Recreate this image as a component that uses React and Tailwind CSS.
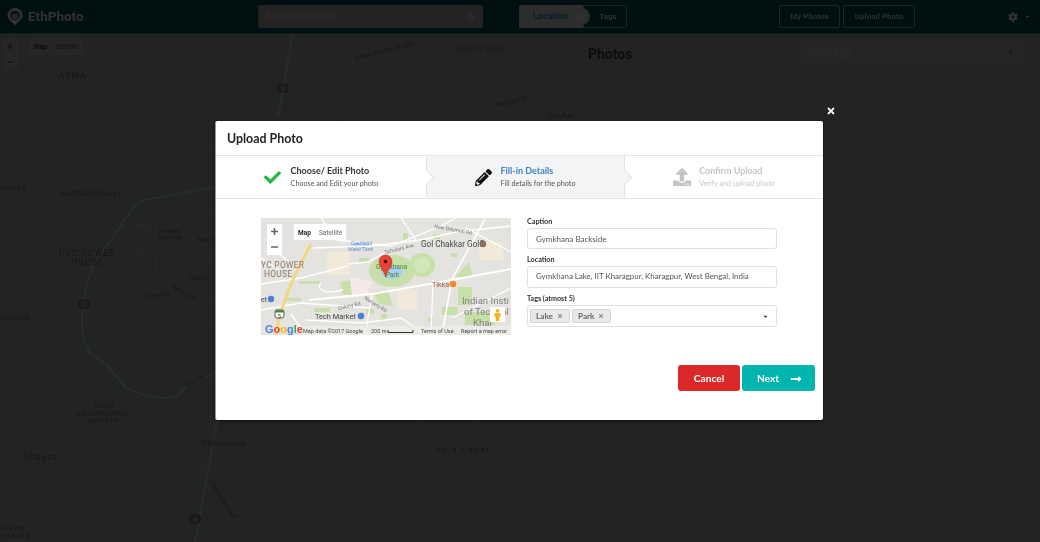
import React from "react";
import { FaCheck, FaPencilAlt, FaUpload, FaTimes, FaCog, FaSearch, FaCaretDown, FaLongArrowAltRight } from "react-icons/fa";

function Pin() {
  return (
    <svg width="16" height="18" viewBox="0 0 16 18" className="ml-[7px]">
      <path d="M8 17.5 C6.5 14.5 .5 12 .5 7.5 a7.5 7.5 0 0 1 15 0 C15.5 12 9.5 14.5 8 17.5 Z" fill="#333434" />
      <circle cx="8" cy="7.5" r="5" fill="#0a1415" />
      <path d="M4.6 9.5 a4 4 0 0 0 6.8 0 l-1.4 -3.4 h-4 z" fill="#262727" />
    </svg>
  );
}

function DarkMap() {
  const minor = [
    "M0 150 L60 135 L120 120 L125 34", "M0 80 L60 70 L120 52 L135 90 L120 120", "M105 55 L130 110 L100 150 L50 170",
    "M260 34 L340 120 L520 90 L573 60", "M300 60 L320 112 L460 80", "M310 70 L470 40 L500 105", "M360 34 L380 100", "M420 34 L445 85",
    "M0 210 L70 190 L140 170 L215 150", "M20 240 L90 215 L160 230 L215 210", "M0 290 L60 270 L110 310 L170 290 L215 300",
    "M0 340 L40 320 L70 380 L130 430 L215 480", "M60 420 L90 460 L80 540", "M0 235 C20 270 35 300 45 350 C60 410 75 460 100 500",
    "M120 300 L180 330 L215 320", "M130 340 L170 370", "M60 250 L90 260 M50 270 L85 285 M45 290 L82 305 M60 230 L95 245",
    "M40 440 L110 480 L170 492 L215 470", "M270 430 C300 470 330 500 370 510 C410 512 430 508 440 508", "M350 460 C370 490 380 510 400 535",
    "M200 470 L250 440 L275 430", "M225 495 L240 520 M207 480 L232 520 L250 542", "M420 420 L435 440 L432 460", "M470 420 L500 435", "M100 500 L110 540",
    "M30 90 L60 110 L100 95", "M150 34 L160 90 L190 120", "M460 34 L573 25", "M330 34 L310 60", "M500 60 L540 110", "M60 34 L50 120",
  ];
  const labels = [
    ["AYMA", 59, 79, 8.5, 1.2], ["SOUTH SIDE", 456, 51, 7, 1], ["NAGAR", 0, 189.5, 7, .8], ["RABINDRAPALLY", 60, 196, 7, .7],
    ["DVC POWER", 59, 256, 8.5, 1], ["HOUSE", 71, 265, 8.5, 1], ["AGICHA", 0, 319.5, 7, .8], ["HIJLI", 95, 408, 6.5, .7],
    ["CO-OPERATIVE", 76, 416, 6.5, .7], ["SOCIETY", 88, 423, 6.5, .7], ["Ghagra", 23, 460, 8.5, 1.2], ["gicha", 0, 530, 8, 1.3],
    ["chalba", 0, 538, 8, 1.3], ["PREMBAZAR", 203, 445.5, 6.5, .6], ["Sola Dahar", 436, 452, 8, 1.6], ["GOPA", 548, 118, 8, 1.2],
    ["Overhead", 158, 233, 5, 0], ["Water Tank", 157, 239, 5, 0],
  ];
  return (
    <svg viewBox="0 34 573 508" width="573" height="508" className="block" fontFamily="Roboto, sans-serif">
      <g fill="none" stroke="#262727" strokeWidth="0.6">
        {minor.map((d, i) => <path key={i} d={d} />)}
      </g>
      <g fill="none" stroke="#292c2e" strokeWidth="2" strokeLinejoin="round">
        <path d="M215 187 L145 200 Q138 201 130 212 L113 237 L95 262 Q84 285 82 317 Q82 345 92 355 L107 365 L125 387 Q140 395 160 398 L175 397 Q183 392 187 385 L215 373" />
        <path d="M293 34 L285 77 L278 117" />
        <path d="M217 420 L200 517 L195 542" />
      </g>
      <g fill="none" stroke="#262929">
        <rect x="135" y="225" width="22" height="20" rx="3" />
        <rect x="138" y="250" width="18" height="24" rx="3" />
        <rect x="190" y="252" width="20" height="14" rx="7" />
      </g>
      {[[283, 88], [84, 304], [195, 519]].map(([x, y]) => (
        <g key={x}>
          <rect x={x - 5} y={y - 4} width="10" height="8" rx="2" fill="#1c1d1d" stroke="#111" strokeWidth="0.8" />
          <text x={x} y={y + 2.5} fontSize="5" textAnchor="middle" fill="#333">5</text>
        </g>
      ))}
      <g fill="#151616">
        {labels.map(([t, x, y, s, l]) => (
          <text key={t} x={x} y={y} fontSize={s} letterSpacing={l}>{t}</text>
        ))}
        <text x="355" y="60" fontSize="6.5" letterSpacing=".3" transform="rotate(-14 355 60)">Balaji Mandir Road</text>
        <text x="498" y="107" fontSize="6.5" transform="rotate(-14 498 107)">Keshiari Rd</text>
        <text x="145" y="298" fontSize="5.5" transform="rotate(-6 145 298)">Colony Rd</text>
        <text x="171" y="287" fontSize="5.5" transform="rotate(30 171 287)">Nursery Rd</text>
        <text x="189" y="279" fontSize="5.5" transform="rotate(6 189 279)">Nalini Ra</text>
        <text x="198" y="242" fontSize="5.5" transform="rotate(-8 198 242)">Schola</text>
        <text x="186" y="387" fontSize="5.5" transform="rotate(-26 186 387)">Boundary</text>
        <text x="211" y="484" fontSize="5.5" transform="rotate(58 211 484)">Prembazar Road</text>
      </g>
      <g>
        <rect x="3" y="39" width="15" height="31" rx="1" fill="#252626" />
        <rect x="30" y="39" width="52" height="16" rx="1" fill="#252626" />
        <text x="7" y="50" fontSize="11" fontWeight="700" fill="#111">+</text>
        <text x="7" y="66" fontSize="11" fontWeight="700" fill="#111">−</text>
        <text x="34" y="49" fontSize="6.5" fontWeight="700" fill="#0c0c0c">Map</text>
        <text x="55" y="49" fontSize="6.5" fill="#141414">Satellite</text>
      </g>
    </svg>
  );
}

function LocalMap() {
  return (
    <svg viewBox="0 0 250 117" width="250" height="117" className="block" fontFamily="Roboto, sans-serif">
      <rect width="250" height="117" fill="#e5e3df" />
      <rect x="66" y="34" width="23" height="23" fill="#f1ead9" />
      <rect x="136" y="72" width="20" height="19" fill="#f1ead9" />
      <rect x="218" y="24" width="24" height="18" fill="#f1ead9" />
      <path d="M89 59 L111 64 L106 77 L89 77 Z" fill="#f7e8ea" />
      <g fill="#c7dfa8">
        <ellipse cx="131" cy="53" rx="23" ry="16" />
        <ellipse cx="161" cy="47" rx="13" ry="12" />
        <path d="M79 64 L89 62 L91 77 L82 76 Z" />
        <path d="M112 74 L126 72 L132 88 L118 86 Z" />
        <path d="M208 44 L212 59 L194 59 Z" />
        <rect x="197" y="69" width="14" height="18" />
        <rect x="181" y="89" width="16" height="8" />
        <rect x="105" y="91" width="8" height="5" />
        <rect x="120" y="96" width="6" height="6" />
        <rect x="167" y="100" width="5" height="4" />
        <rect x="142" y="15" width="5" height="7" />
        <rect x="172" y="16" width="7" height="5" />
        <rect x="190" y="35" width="6" height="4" />
        <rect x="53" y="90" width="16" height="4" />
        <rect x="24" y="80" width="16" height="3" />
        <rect x="38" y="63" width="22" height="3" />
        <rect x="98" y="40" width="10" height="4" />
        <rect x="204" y="94" width="30" height="13" />
      </g>
      <ellipse cx="161" cy="47" rx="8" ry="8" fill="#d3e6bb" />
      <ellipse cx="131" cy="54" rx="11" ry="7" fill="#a9cff0" />
      <ellipse cx="100" cy="27" rx="8" ry="3" fill="#a9cff0" />
      <g fill="none" stroke="#fff" strokeWidth="1.3">
        <path d="M60 0 L75 22 L130 28 L180 8 L195 0" />
        <path d="M52 30 L110 28 L160 22 L195 14 L250 8" />
        <path d="M87 46 L107 44 L125 34" />
        <path d="M0 66 L40 60 L87 48" />
        <path d="M48 82 L111 76 L180 64 L250 51" strokeWidth="2" />
        <path d="M224 1 L191 61 L181 117" strokeWidth="1.6" />
        <path d="M111 77 L104 117" />
        <path d="M0 92 L40 85 L80 88 L108 90" />
        <path d="M45 102 L100 105 L140 100 L165 117" />
        <path d="M60 64 C54 74 66 76 82 72" />
        <path d="M172 62 L170 117" />
        <path d="M191 100 L250 70" />
        <path d="M140 0 L155 22" />
        <path d="M205 10 L250 34" />
        <path d="M30 96 L45 117" />
        <path d="M10 30 L30 45 M0 40 L18 52" />
      </g>
      <path d="M50 26 C38 48 28 70 24 82 C19 96 16 108 15 117" fill="none" stroke="#f4d67c" strokeWidth="2.8" />
      <g>
        <text x="160" y="29" fill="#4a4a4a" fontSize="8.2">Gol Chakkar GolC</text>
        <circle cx="222" cy="26" r="3.2" fill="#8d6e63" />
        <text x="171" y="68.500" fill="#9c5b34" fontSize="7.2">Tikka</text>
        <circle cx="192" cy="66" r="3.3" fill="#f08a24" />
        <text x="54" y="101" fill="#444" fontSize="7.4">Tech Market</text>
        <circle cx="100" cy="98" r="3.3" fill="#4d7fd6" />
        <circle cx="10" cy="81" r="3.2" fill="#4d7fd6" />
        <text x="0" y="84" fill="#444" fontSize="7" textAnchor="start">et</text>
        <text x="0" y="50" fill="#8d7a68" fontSize="8.400" letterSpacing=".3">YC POWER</text>
        <text x="3" y="59" fill="#8d7a68" fontSize="8.400" letterSpacing=".3">HOUSE</text>
        <text x="201" y="86" fill="#808080" fontSize="9.600">Indian Insti</text>
        <text x="203" y="97" fill="#808080" fontSize="9.600">of Tec</text>
        <text x="240" y="97" fill="#808080" fontSize="9.600">ol</text>
        <text x="212" y="108" fill="#808080" fontSize="9.600">Khar</text>
        <text x="90" y="27" fill="#5b8fd0" fontSize="5.200" fontStyle="italic">Overhead</text>
        <text x="87" y="33" fill="#5b8fd0" fontSize="5.200" fontStyle="italic">Water Tank</text>
        <text x="124" y="36" fill="#777" fontSize="5.200" transform="rotate(-14 124 36)">Scholars Ave</text>
        <text x="173" y="10" fill="#777" fontSize="5.200" transform="rotate(10 173 10)">New Bitumen Rd</text>
        <text x="77" y="92" fill="#777" fontSize="5.200" transform="rotate(-12 77 92)">Colony Rd</text>
        <text x="103" y="81" fill="#777" fontSize="5.200" transform="rotate(32 103 81)">Nursery Rd</text>
        <text x="115" y="51" fill="#4b8a2e" fontSize="6.600">Gymkhana</text>
        <text x="125" y="59" fill="#4b8a2e" fontSize="6.600">Park</text>
      </g>
      <g>
        <rect x="14" y="92" width="9" height="8" rx="2" fill="#fff" stroke="#333" strokeWidth=".8" />
        <rect x="14" y="92" width="9" height="2.500" fill="#4a8a3c" />
        <text x="18.500" y="99.500" fontSize="5" textAnchor="middle" fill="#222">5</text>
      </g>
      <path d="M124.500 59 C123 52 118 49 118 43.500 a6.500 6.500 0 0 1 13 0 C131 49 126 52 124.500 59 Z" fill="#ea4335" stroke="#b3261e" strokeWidth=".5" />
      <circle cx="124.500" cy="43.500" r="1.800" fill="#3a0a08" />
      <rect x="6" y="6" width="15" height="31" fill="#fff" />
      <path d="M13.500 10 v7 M10 13.500 h7 M10 29 h7" stroke="#666" strokeWidth="1.600" />
      <rect x="33" y="6" width="52" height="16" fill="#fff" />
      <text x="37" y="17" fontSize="6.500" fontWeight="700" fill="#222">Map</text>
      <text x="58" y="17" fontSize="6.500" fill="#666">Satellite</text>
      <rect x="229" y="89" width="15" height="15" fill="#fff" />
      <path d="M236.500 91 a1.800 1.800 0 1 1 -.01 0 Z M233.500 95 h6 v4 h-1.200 v4 h-3.600 v-4 h-1.200 Z" fill="#f2b31d" />
      <rect x="41" y="108" width="209" height="9" fill="#eeeeea" opacity=".75" />
      <g fontSize="11" fontWeight="700" fontFamily="'Liberation Sans', sans-serif">
        <text x="4" y="115"><tspan fill="#4285f4">G</tspan><tspan fill="#ea4335">o</tspan><tspan fill="#fbbc05">o</tspan><tspan fill="#4285f4">g</tspan><tspan fill="#34a853">l</tspan><tspan fill="#ea4335">e</tspan></text>
      </g>
      <g fontSize="5.500" fill="#444">
        <text x="42" y="115">Map data ©2017 Google</text>
        <text x="110" y="115">200 m</text>
        <text x="160" y="115">Terms of Use</text>
        <text x="200" y="115">Report a map error</text>
      </g>
      <path d="M127 112 v2.500 h25 v-2.500" fill="none" stroke="#333" strokeWidth="1" />
    </svg>
  );
}

function Step({ icon, title, sub, active, disabled, className, last }) {
  return (
    <div className={`relative flex items-center justify-center gap-[8px] h-full ${active ? "bg-[#f3f4f5]" : "bg-white"} ${className}`}>
      {icon}
      <div>
        <div className={`text-[9px] leading-[13px] font-bold ${active ? "text-[#4183c4]" : disabled ? "text-[#c6c6c6]" : "text-[#333]"}`}>{title}</div>
        <div className={`text-[7.2px] leading-[13px] ${disabled ? "text-[#c9c9c9]" : "text-[#555]"}`}>{sub}</div>
      </div>
      {!last && (
        <span className={`absolute z-10 right-[-6px] top-[16px] w-[11px] h-[11px] rotate-45 border-t border-r border-[#e4e4e4] ${active ? "bg-[#f3f4f5]" : "bg-white"}`} />
      )}
    </div>
  );
}

function Tag({ children }) {
  return (
    <span className="flex items-center h-[14px] pl-[5px] pr-[6px] gap-[4px] bg-[#e8e8e8] border border-[#d4d4d4] rounded-[2px] text-[8.2px] font-bold text-[#666]">
      {children}
      <FaTimes className="text-[6px] text-[#888]" />
    </span>
  );
}

export default function App() {
  return (
    <div className="relative w-[1040px] h-[542px] overflow-hidden bg-[#222323] blur-[0.35px] font-['Lato','Noto_Sans',sans-serif]">
      <header className="flex items-center h-[34px] bg-[#000f10] border-b border-[#1a1c1c]">
        <Pin />
        <span className="ml-[5px] w-[230px] text-[13.5px] font-bold text-[#323333] font-['Roboto',sans-serif]">EthPhoto</span>
        <div className="flex items-center justify-between w-[225px] h-[23px] px-[8px] bg-[#232323] rounded-[2px] text-[8.5px] text-[#2e2e2e]">
          Search by Location
          <FaSearch className="text-[#303030] text-[8px]" />
        </div>
        <div className="relative flex ml-[36px]">
          <div className="flex items-center w-[64px] h-[23px] pl-[14px] bg-[#2d2d2d] rounded-l-[2px] text-[9px] font-bold text-[#022226] font-['Roboto',sans-serif]">Location</div>
          <div className="absolute left-[54px] top-[3px] flex items-center justify-center w-[17px] h-[17px] rounded-full bg-[#2d2d2d] text-[7.5px] text-[#3c3c3c]">or</div>
          <div className="flex items-center justify-center w-[44px] h-[23px] pl-[6px] border border-[#162526] rounded-r-[2px] text-[8px] font-bold text-[#2b3535] font-['Roboto',sans-serif]">Tags</div>
        </div>
        <div className="flex gap-[3px] ml-[152px]">
          <div className="flex items-center justify-center w-[61px] h-[23px] border border-[#182728] rounded-[2px] text-[8px] font-bold text-[#293030] font-['Roboto',sans-serif]">My Photos</div>
          <div className="flex items-center justify-center w-[72px] h-[23px] border border-[#182728] rounded-[2px] text-[8px] font-bold text-[#293030] font-['Roboto',sans-serif]">Upload Photo</div>
        </div>
        <FaCog className="ml-[93px] text-[10px] text-[#333]" />
        <FaCaretDown className="ml-[6px] text-[7px] text-[#333]" />
      </header>

      <main className="flex">
        <div className="w-[573px] shrink-0"><DarkMap /></div>
        <div className="flex-1 flex justify-between pl-[15px] pr-[18px] pt-[8px]">
          <h1 className="mt-[2px] text-[14px] font-bold text-[#0d0d0d] leading-[20px] font-['Roboto',sans-serif]">Photos</h1>
          <div className="flex items-center justify-between w-[223px] h-[20px] px-[8px] bg-[#252525] rounded-[2px] text-[8.5px] text-[#2e2e2e]">
            Search Tags
            <FaCaretDown className="text-[7px] text-[#111]" />
          </div>
        </div>
      </main>

      <FaTimes className="absolute left-[826px] top-[106px] text-[10px] text-white" />

      <section className="absolute left-[215px] top-[121px] w-[608px] h-[299px] bg-white border-l border-[#999] rounded-[2px] shadow-[0_1px_3px_rgba(0,0,0,.6)]">
        <h2 className="h-[34px] pl-[11px] pt-[9px] text-[12.4px] leading-[18px] font-bold text-[#222]">Upload Photo</h2>
        <div className="grid grid-cols-[211px_198px_198px] h-[44px] border-y border-[#e4e4e4]">
          <Step
            icon={<FaCheck className="text-[#21ba45] text-[17px] mr-[2px]" />}
            title="Choose/ Edit Photo"
            sub="Choose and Edit your photo"
            className="border-r border-[#e4e4e4]"
          />
          <Step
            icon={<FaPencilAlt className="text-[#111] text-[17px]" />}
            title="Fill-in Details"
            sub="Fill details for the photo"
            active
            className="border-r border-[#e4e4e4]"
          />
          <Step
            icon={<FaUpload className="text-[#c4c4c4] text-[18px]" />}
            title="Confirm Upload"
            sub="Verify and upload photo"
            disabled
            last
          />
        </div>

        <div className="flex gap-[16px] pl-[45px] pt-[19px]">
          <LocalMap />
          <div className="w-[250px] text-[#333]">
            <label className="block text-[7.2px] leading-[10px] font-bold mt-[-1px]">Caption</label>
            <div className="flex items-center h-[21px] mt-[1px] px-[8px] border border-[#e0e0e0] rounded-[3px] text-[8px] text-[#555]">Gymkhana Backside</div>
            <label className="block text-[7.2px] leading-[10px] font-bold mt-[6px]">Location</label>
            <div className="flex items-center h-[22px] mt-[1px] px-[8px] border border-[#e0e0e0] rounded-[3px] text-[7.9px] text-[#555] whitespace-nowrap">Gymkhana Lake, IIT Kharagpur, Kharagpur, West Bengal, India</div>
            <label className="block text-[7.2px] leading-[10px] font-bold mt-[6px]">Tags (atmost 5)</label>
            <div className="flex items-center gap-[2px] h-[22px] mt-[1px] pl-[2px] pr-[7px] border border-[#e0e0e0] rounded-[3px]">
              <Tag>Lake</Tag>
              <Tag>Park</Tag>
              <FaCaretDown className="ml-auto text-[7px] text-[#444]" />
            </div>
          </div>
        </div>

        <div className="flex justify-end gap-[2px] pr-[8px] mt-[30px]">
          <button className="w-[62px] h-[26px] pt-[1px] bg-[#db2828] rounded-[3px] text-white text-[10.2px] font-bold">Cancel</button>
          <button className="flex items-center justify-center gap-[11px] w-[73px] h-[26px] pt-[1px] pl-[2px] bg-[#00b5ad] rounded-[3px] text-white text-[10.2px] font-bold">
            Next <FaLongArrowAltRight className="text-[12px]" />
          </button>
        </div>
      </section>
    </div>
  );
}
